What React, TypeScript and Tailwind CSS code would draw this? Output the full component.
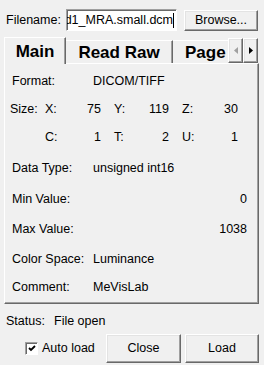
import React from 'react';

const raised =
    'bg-[#f0f0f0] border border-t-white border-l-white border-r-[#696969] border-b-[#696969] shadow-[inset_-1px_-1px_0_#a0a0a0,inset_1px_1px_0_#e3e3e3]';

function Row({ label, value, right = false, className = '' }: { label: string; value: string; right?: boolean; className?: string }) {
    return (
        <div className={`flex items-center h-[28px] pl-[7px] pr-[11px] ${className}`}>
            <span className="w-[81px] shrink-0">{label}</span>
            <span className={right ? 'flex-1 text-right' : ''}>{value}</span>
        </div>
    );
}

function Cell({ label, value, className = '' }: { label: string; value: string; className?: string }) {
    return (
        <div className={`flex justify-between ${className}`}>
            <span>{label}</span>
            <span>{value}</span>
        </div>
    );
}

export default function App() {
    return (
        <div className="w-[264px] h-[365px] overflow-hidden bg-[#f0f0f0] text-black text-[12.5px] leading-none font-['Liberation_Sans',Arial,sans-serif]">
            {/* filename */}
            <div className="flex items-center h-[22px] mt-[9px] pl-[6px]">
                <span className="w-[60px] shrink-0">Filename:</span>
                <div className="w-[111px] h-[22px] bg-white border border-t-[#a0a0a0] border-l-[#a0a0a0] border-r-white border-b-white shadow-[inset_1px_1px_0_#696969] flex items-center justify-end overflow-hidden pr-[2px]">
                    <span className="whitespace-nowrap">Head1_MRA.small.dcm</span>
                    <span className="w-px h-[15px] bg-black shrink-0" />
                </div>
                <button className={`ml-[7px] w-[74px] h-[21px] ${raised}`}>Browse...</button>
            </div>

            {/* tabs */}
            <div className="flex items-end h-[26px] mt-[6px] pl-[4px] font-bold text-[17px]">
                <div className="relative z-10 -mb-px w-[62px] h-[27px] bg-[#f0f0f0] border-t border-l border-t-white border-l-white border-r border-r-[#696969] shadow-[inset_-1px_0_0_#a0a0a0] flex items-center justify-center">
                    Main
                </div>
                <div className="w-[107px] h-[23px] border-t border-t-white border-r border-r-[#696969] shadow-[inset_-1px_0_0_#a0a0a0] flex items-center justify-center">
                    Read Raw
                </div>
                <div className="w-[55px] h-[23px] border-t border-t-white overflow-hidden flex items-center pl-[12px]">
                    <span className="whitespace-nowrap">Page</span>
                </div>
                <div className="flex self-start h-[25px] mt-px">
                    <div className={`w-[15px] h-[25px] flex items-center justify-center ${raised}`}>
                        <svg width="4" height="7" viewBox="0 0 4 7">
                            <path d="M4 0 L0 3.5 L4 7 Z" fill="#a0a0a0" />
                        </svg>
                    </div>
                    <div className={`w-[15px] h-[25px] flex items-center justify-center ${raised}`}>
                        <svg width="4" height="7" viewBox="0 0 4 7">
                            <path d="M0 0 L4 3.5 L0 7 Z" fill="#000" />
                        </svg>
                    </div>
                </div>
            </div>

            {/* panel */}
            <div className="ml-[4px] w-[255px] h-[241px] border border-t-white border-l-white border-r-[#696969] border-b-[#696969] shadow-[inset_-1px_-1px_0_#a0a0a0] pt-[3px]">
                <Row label="Format:" value="DICOM/TIFF" />
                <div className="flex items-center h-[28px] pl-[5px]">
                    <span className="w-[35px] shrink-0">Size:</span>
                    <Cell label="X:" value="75" className="w-[56px]" />
                    <Cell label="Y:" value="119" className="w-[55px] ml-[13px]" />
                    <Cell label="Z:" value="30" className="w-[56px] ml-[13px]" />
                </div>
                <div className="flex items-center h-[28px] pl-[5px]">
                    <span className="w-[35px] shrink-0" />
                    <Cell label="C:" value="1" className="w-[56px]" />
                    <Cell label="T:" value="2" className="w-[55px] ml-[13px]" />
                    <Cell label="U:" value="1" className="w-[56px] ml-[13px]" />
                </div>
                <Row label="Data Type:" value="unsigned int16" className="mt-[3px]" />
                <Row label="Min Value:" value="0" right className="mt-[3px]" />
                <Row label="Max Value:" value="1038" right className="mt-[2px]" />
                <Row label="Color Space:" value="Luminance" className="mt-[2px]" />
                <Row label="Comment:" value="MeVisLab" />
            </div>

            {/* status */}
            <div className="flex items-center h-[20px] mt-[7px] pl-[6px]">
                <span className="w-[48px] shrink-0">Status:</span>
                <span>File open</span>
            </div>

            {/* bottom */}
            <div className="flex items-center h-[29px] mt-[3px] pl-[25px]">
                <div className="w-[13px] h-[13px] bg-white border border-t-[#a0a0a0] border-l-[#a0a0a0] border-r-white border-b-white shadow-[inset_1px_1px_0_#696969] flex items-center justify-center">
                    <svg width="8" height="7" viewBox="0 0 8 7">
                        <path d="M1 3 L3 5 L7 1" stroke="#000" strokeWidth="1.8" fill="none" />
                    </svg>
                </div>
                <span className="ml-[4px] w-[64px]">Auto load</span>
                <button className={`w-[75px] h-[29px] ${raised}`}>Close</button>
                <button className={`ml-[4px] w-[74px] h-[29px] ${raised}`}>Load</button>
            </div>
        </div>
    );
}
